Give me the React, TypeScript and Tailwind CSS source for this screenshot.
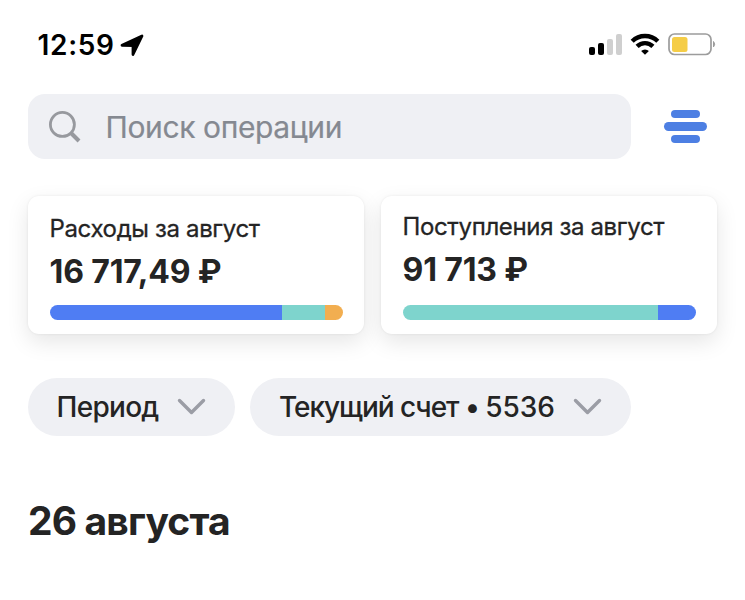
import type { ReactNode } from "react";

type Segment = { color: string; width: number };

function StatusBar() {
  return (
    <header className="flex h-[94px] items-start justify-between pt-[31px] pr-[28px] pl-[37.5px] text-black">
      <div className="flex items-center">
        <span className="text-[28px] leading-7 font-semibold tracking-[0.7px] whitespace-nowrap">12:59</span>
        <svg className="ml-[5.5px]" width="24" height="24" viewBox="0 0 24 24">
          <path d="M22 3 13 21.5V12.5L2 12.3Z" fill="currentColor" stroke="currentColor" strokeWidth="2.8" strokeLinejoin="round" />
        </svg>
      </div>
      <div className="flex items-center pt-px">
        <div className="flex h-[21px] items-end gap-[3px]">
          <i className="h-2 w-1.5 rounded-[2px] bg-black" />
          <i className="h-3 w-1.5 rounded-[2px] bg-black" />
          <i className="h-4 w-1.5 rounded-[2px] bg-[#cfcfcf]" />
          <i className="h-[21px] w-1.5 rounded-[2px] bg-[#cfcfcf]" />
        </div>
        <svg className="ml-[8px]" width="30" height="22" viewBox="0 0 30 22" fill="none" stroke="currentColor" strokeWidth="4.4">
          <path d="M2.2 8.2a18.2 18.2 0 0 1 25.6 0" />
          <path d="M7.1 13.4a11.2 11.2 0 0 1 15.8 0" />
          <path d="M11.1 18a5.6 5.6 0 0 1 7.8 0L15 21.8Z" fill="currentColor" stroke="none" />
        </svg>
        <svg className="ml-[8px]" width="49" height="24" viewBox="0 0 49 24">
          <rect x="1" y="2" width="42" height="20.5" rx="5.5" fill="none" stroke="#9c9c9c" strokeWidth="1.7" />
          <rect x="4" y="5" width="15.5" height="15" rx="2.5" fill="#f5cd47" />
          <path d="M45.5 9.5q2.4 2.7 0 5.5Z" fill="#9c9c9c" stroke="#9c9c9c" />
        </svg>
      </div>
    </header>
  );
}

function Card({ title, amount, segments, className }: { title: string; amount: string; segments: Segment[]; className: string }) {
  return (
    <section className={`flex h-[138px] w-[336px] flex-col rounded-[11px] bg-white px-[21.5px] shadow-[0_8px_22px_rgba(0,0,0,0.1),0_0_3px_rgba(0,0,0,0.07)] ${className}`}>
      <h2 className="text-[24px] leading-7 tracking-[-0.36px] whitespace-nowrap [-webkit-text-stroke:0.3px_currentColor]">{title}</h2>
      <p className="mt-[13px] text-[32px] leading-8 font-bold tracking-[-0.15px] whitespace-nowrap">{amount}</p>
      <div className="mt-auto mb-[14px] flex h-[15px] overflow-hidden rounded-full">
        {segments.map((s) => (
          <span key={s.color} style={{ width: s.width, background: s.color }} />
        ))}
      </div>
    </section>
  );
}

function Chip({ children, className }: { children: ReactNode; className: string }) {
  return (
    <button className={`flex h-[58px] items-center justify-between rounded-full bg-[#eff0f4] pr-[29px] text-[28px] font-medium whitespace-nowrap ${className}`}>
      <span>{children}</span>
      <svg width="29" height="18" viewBox="0 0 29 18" fill="none" stroke="#9b9da5" strokeWidth="3.4" strokeLinecap="round" strokeLinejoin="round">
        <path d="M2.5 2.5 14.5 14.5 26.5 2.5" />
      </svg>
    </button>
  );
}

export default function App() {
  return (
    <main className="h-[600px] w-[745px] overflow-hidden bg-white font-['Inter','Liberation_Sans',sans-serif] text-[#242424]">
      <StatusBar />
      <div className="flex items-center pl-7">
        <div className="flex h-[65px] w-[603px] items-center rounded-[17px] bg-[#eff0f4] pl-[20px] text-[#858991]">
          <svg width="34" height="34" viewBox="0 0 34 34" fill="none" stroke="#97999e">
            <circle cx="14.4" cy="14.4" r="12" strokeWidth="2.8" />
            <path d="M23 23 31 31" strokeWidth="4" />
          </svg>
          <span className="ml-[23.5px] pt-0.5 text-[30px] tracking-[-0.38px] whitespace-nowrap [-webkit-text-stroke:0.2px_currentColor]">Поиск операции</span>
        </div>
        <div className="ml-[33px] flex w-[43px] flex-col items-center gap-1">
          <i className="h-[8.5px] w-[29px] rounded-full bg-[#4d7fe3]" />
          <i className="h-[8.5px] w-[43px] rounded-full bg-[#4d7fe3]" />
          <i className="h-[8.5px] w-[29px] rounded-full bg-[#4d7fe3]" />
        </div>
      </div>
      <div className="mt-[37px] flex gap-[17px] pl-7">
        <Card
          title="Расходы за август"
          amount="16 717,49 ₽"
          className="pt-[19px]"
          segments={[{ color: "#4f7df3", width: 232 }, { color: "#7ed4cd", width: 43 }, { color: "#f2ae50", width: 18 }]}
        />
        <Card
          title="Поступления за август"
          amount="91 713 ₽"
          className="pt-[17px]"
          segments={[{ color: "#7ed4cd", width: 255 }, { color: "#4f7df3", width: 38 }]}
        />
      </div>
      <div className="mt-[44px] flex gap-[15px] pl-7">
        <Chip className="w-[207px] pl-[28.5px]">
          <span className="tracking-[-0.7px]">Период</span>
        </Chip>
        <Chip className="w-[381px] pl-[29px]">
          <span className="tracking-[-1.05px]">Текущий счет • </span>5536
        </Chip>
      </div>
      <h1 className="mt-[61px] pl-7 text-[39px] leading-[48px] font-bold tracking-[-0.85px] whitespace-nowrap">26 августа</h1>
    </main>
  );
}
